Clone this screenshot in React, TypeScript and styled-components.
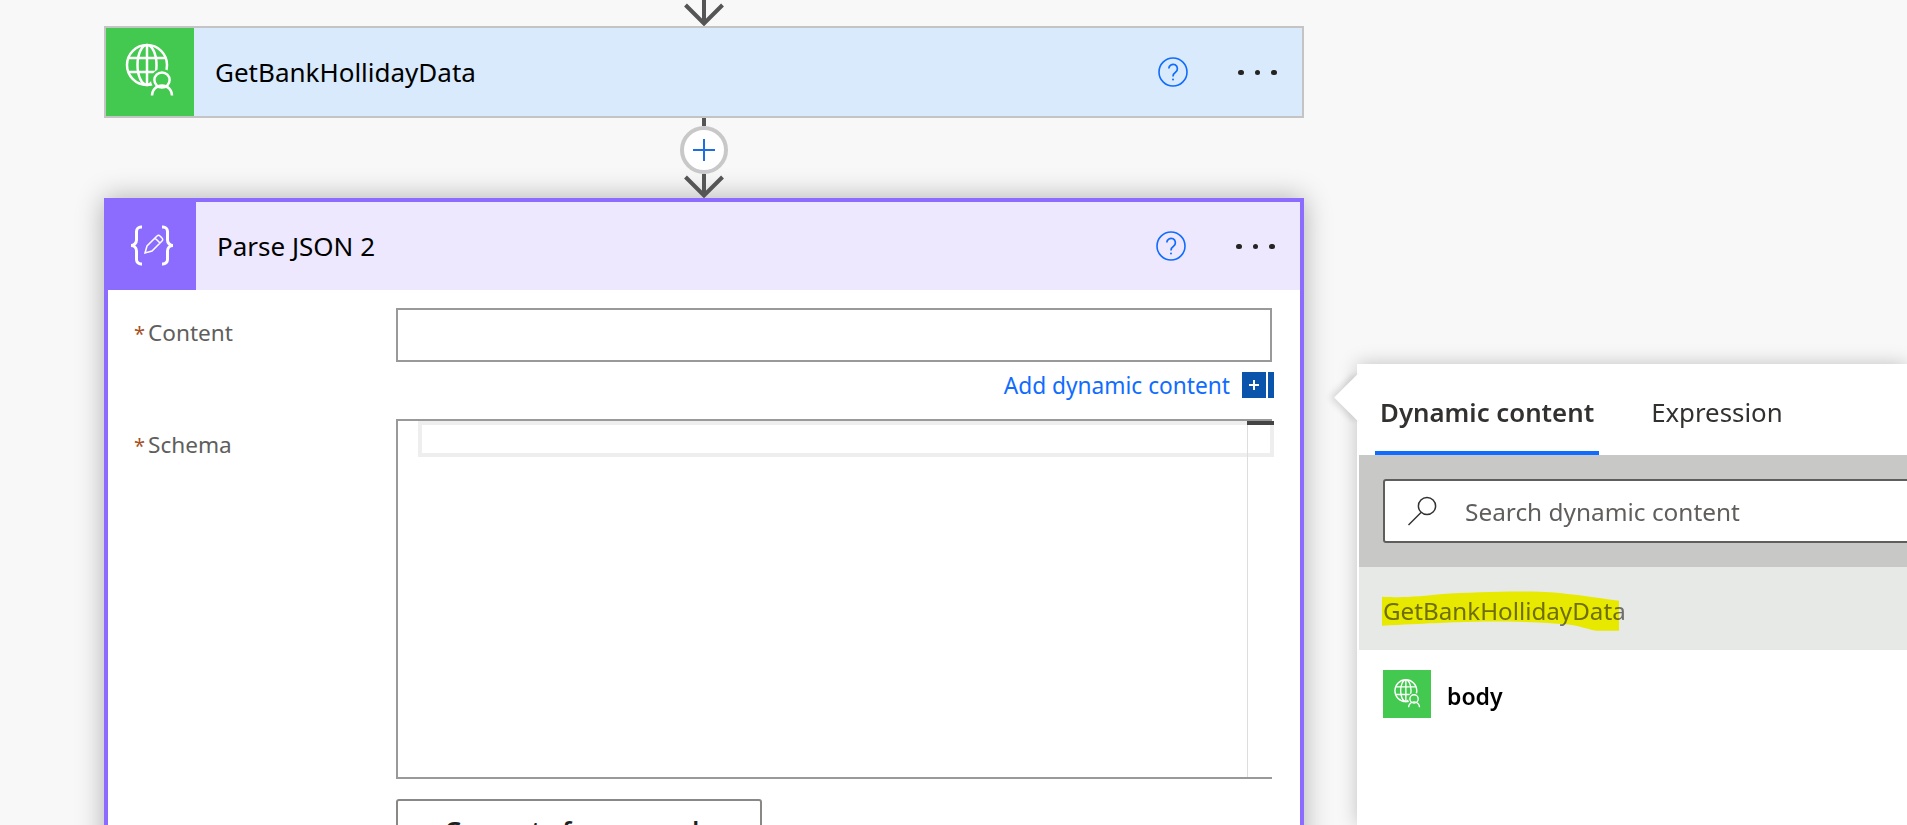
import React from 'react';
import styled, {createGlobalStyle} from 'styled-components';

const GlobalStyle = createGlobalStyle`
  html, body {
    margin: 0;
    padding: 0;
    background: #f8f8f8;
  }
  * {
    box-sizing: border-box;
  }
`;

const FONT = `"Noto Sans", "Open Sans", "Liberation Sans", sans-serif`;
const GREEN = '#43c94f';
const PURPLE = '#8c6cff';
const BLUE = '#0f6cff';

const Page = styled.div`
  position: relative;
  width: 1907px;
  height: 825px;
  overflow: hidden;
  background: #f8f8f8;
  font-family: ${FONT};
  padding-left: 104px;
`;

const Flow = styled.div`
  width: 1200px;
  display: flex;
  flex-direction: column;
`;

const ArrowWrap = styled.div`
  display: flex;
  justify-content: center;
  position: relative;
  z-index: 1;
`;

const Connector = styled.div`
  height: 80px;
  display: flex;
  flex-direction: column;
  align-items: center;
  position: relative;
  z-index: 1;
`;

const Stem = styled.div`
  width: 4px;
  height: 8px;
  background: #555;
`;

const AddCircle = styled.div`
  width: 48px;
  height: 48px;
  border: 4px solid #c8c8c8;
  border-radius: 50%;
  background: #fff;
  display: flex;
  align-items: center;
  justify-content: center;
`;

const Card = styled.div<{$active?: boolean}>`
  position: relative;
  background: #fff;
  border: ${p => (p.$active ? `4px solid ${PURPLE}` : '2px solid #c4c4c4')};
  box-shadow: ${p => (p.$active ? '0 0 26px rgba(0, 0, 0, 0.3)' : 'none')};
`;

const CardHead = styled.div<{$bg: string}>`
  height: 88px;
  display: flex;
  align-items: center;
  background: ${p => p.$bg};
  padding-right: 25px;
`;

const IconBox = styled.div<{$bg: string; $size: number}>`
  width: ${p => p.$size}px;
  height: ${p => p.$size}px;
  flex: none;
  background: ${p => p.$bg};
  display: flex;
  align-items: center;
  justify-content: center;
`;

const CardTitle = styled.div`
  flex: 1;
  margin-left: 21px;
  font-size: 26px;
  color: #000;
`;

const HelpButton = styled.div`
  width: 30px;
  height: 30px;
  margin-right: 50px;
`;

const Dots = styled.div`
  display: flex;
  gap: 11px;
  width: 39px;
  margin-top: 1px;
`;

const Dot = styled.span`
  width: 5.6px;
  height: 5.6px;
  border-radius: 50%;
  background: #252423;
`;

const CardBody = styled.div`
  display: grid;
  grid-template-columns: 288px 876px;
  padding-top: 18px;
  height: 600px;
  align-content: start;
`;

const Label = styled.div<{$top: number}>`
  padding: ${p => p.$top}px 0 0 26px;
  font-size: 22.6px;
  line-height: 28px;
  color: #605e5c;
`;

const Star = styled.span`
  color: #a8501f;
  margin-right: 3px;
  font-size: 20px;
`;

const TextBox = styled.div`
  height: 54px;
  background: #fff;
  border: 2px solid #999;
`;

const DynamicRow = styled.div`
  grid-column: 2;
  display: flex;
  align-items: center;
  justify-content: flex-end;
  gap: 12px;
  height: 26px;
  margin: 10px -2px 21px 0;
  font-size: 22.7px;
  color: ${BLUE};
`;

const AddButton = styled.div`
  display: flex;
  gap: 2px;
  height: 26px;
`;

const AddButtonMain = styled.div`
  width: 24px;
  background: #0a54ab;
  color: #fff;
  display: flex;
  align-items: center;
  justify-content: center;
`;

const AddButtonEdge = styled.div`
  width: 6px;
  background: #0a54ab;
`;

const Editor = styled.div`
  position: relative;
  height: 360px;
  background: #fff;
  border: 2px solid #999;
  border-right: none;
`;

const LineHighlight = styled.div`
  position: absolute;
  left: 20px;
  right: -2px;
  top: 0;
  height: 36px;
  border: 4px solid #eee;
`;

const ScrollRail = styled.div`
  position: absolute;
  left: 849px;
  top: 0;
  bottom: 0;
  width: 1px;
  background: #ddd;
`;

const ScrollMark = styled.div`
  position: absolute;
  left: 849px;
  right: -2px;
  top: 0;
  height: 4px;
  background: #444;
`;

const SampleButton = styled.div`
  grid-column: 2;
  width: 366px;
  height: 62px;
  margin-top: 20px;
  border: 2px solid #8a8886;
  border-radius: 3px;
  background: #fff;
  display: flex;
  align-items: center;
  justify-content: center;
  font-size: 24.6px;
  font-weight: 600;
  color: #201f1e;
`;

/* floating dynamic content flyout, sits over the canvas */
const Flyout = styled.div`
  position: absolute;
  left: 1357px;
  top: 364px;
  right: 0;
  bottom: 0;
  z-index: 2;
  padding-left: 2px;
  background: #fff;
  box-shadow: 0 0 18px rgba(0, 0, 0, 0.22);
`;

const FlyoutTip = styled.div`
  position: absolute;
  left: -16px;
  top: 17px;
  width: 33px;
  height: 33px;
  background: #fff;
  transform: rotate(45deg);
  box-shadow: -3px 3px 7px rgba(0, 0, 0, 0.14);
`;

const TabBar = styled.div`
  position: relative;
  height: 91px;
  display: flex;
  gap: 47px;
  padding-left: 16px;
  background: #fff;
`;

const Tab = styled.div<{$active?: boolean}>`
  height: 91px;
  padding: 8px 5px 0;
  display: flex;
  align-items: center;
  font-size: 25.8px;
  font-weight: ${p => (p.$active ? 600 : 400)};
  color: #323130;
  border-bottom: 4px solid ${p => (p.$active ? BLUE : 'transparent')};
`;

const SearchSection = styled.div`
  position: relative;
  height: 112px;
  padding: 24px 0 0 24px;
  background: #c8c9c7;
`;

const SearchBox = styled.div`
  height: 64px;
  margin-right: -10px;
  padding-left: 22px;
  display: flex;
  align-items: center;
  gap: 28px;
  background: #fff;
  border: 2px solid #605e5c;
  border-radius: 3px;
  font-size: 24.4px;
  color: #605e5c;
`;

const GroupRow = styled.div`
  position: relative;
  height: 83px;
  padding: 4px 0 0 24px;
  display: flex;
  align-items: center;
  background: #e7e9e7;
  font-size: 24.2px;
  color: #6f6e6c;
`;

const Marker = styled.svg`
  position: absolute;
  left: 23px;
  top: 23px;
  mix-blend-mode: multiply;
`;

const ItemRow = styled.div`
  position: relative;
  display: flex;
  align-items: center;
  gap: 16px;
  padding: 20px 0 0 24px;
  background: #fff;
`;

const ItemName = styled.div`
  font-size: 23px;
  font-weight: 600;
  color: #000;
  position: relative;
  top: 2px;
`;

function FlowArrow({height}: {height: number}) {
  return (
    <svg width="48" height={height} viewBox={`0 0 48 ${height}`} fill="none">
      <path d={`M24 0V${height - 2}M5.5 ${height - 21}L24 ${height - 2.5}L42.5 ${height - 21}`} stroke="#555" strokeWidth="4"/>
    </svg>
  );
}

function GlobeUserIcon({size}: {size: number}) {
  return (
    <svg width={size} height={size} viewBox="0 0 64 64" fill="none" stroke="#fff" strokeWidth="2.5">
      <mask id={`globe-cut-${size}`}>
        <rect width="64" height="64" fill="#fff" stroke="none"/>
        <circle cx="44" cy="40" r="11" fill="#000" stroke="none"/>
        <path d="M30 60a14 14 0 0 1 28 0z" fill="#000" stroke="none"/>
      </mask>
      <g mask={`url(#globe-cut-${size})`}>
        <circle cx="29" cy="25" r="20"/>
        <ellipse cx="29" cy="25" rx="9.5" ry="20"/>
        <path d="M29 5V45M10.5 18H47.5M10.5 32H47.5"/>
      </g>
      <circle cx="44" cy="40" r="7.6"/>
      <path d="M34 55.5a10 10 0 0 1 20 0"/>
    </svg>
  );
}

function ParseIcon() {
  return (
    <svg width="64" height="64" viewBox="0 0 64 64" fill="none" stroke="#fff">
      <path strokeWidth="3" d="M22 13h-1a4.5 4.5 0 0 0-4.5 4.5v8.5a5.5 5.5 0 0 1-5.5 5.5a5.5 5.5 0 0 1 5.5 5.5v8.5a4.5 4.5 0 0 0 4.5 4.5h1"/>
      <path strokeWidth="3" d="M42 13h1a4.5 4.5 0 0 1 4.5 4.5v8.5a5.5 5.5 0 0 0 5.5 5.5a5.5 5.5 0 0 0-5.5 5.5v8.5a4.5 4.5 0 0 1-4.5 4.5h-1"/>
      <path strokeWidth="1.5" d="M25 39l2-7l10-10a2 2 0 0 1 3 0l2 2a2 2 0 0 1 0 3l-10 10zM35 24l5 5"/>
    </svg>
  );
}

function HelpIcon() {
  return (
    <svg width="30" height="30" viewBox="0 0 30 30" fill="none" stroke={BLUE}>
      <circle cx="15" cy="15" r="14" strokeWidth="1.6"/>
      <path strokeWidth="1.7" d="M10.8 11.6a4.3 4.3 0 1 1 6.7 3.6c-1.6 1.1-2.5 1.8-2.5 4.2"/>
      <circle cx="15" cy="22.6" r="1" fill={BLUE} stroke="none"/>
    </svg>
  );
}

function SearchIcon() {
  return (
    <svg width="30" height="30" viewBox="0 0 30 30" fill="none" stroke="#323130" strokeWidth="1.5" style={{flex: 'none'}}>
      <circle cx="20" cy="10" r="8.6"/>
      <path d="M14 16.5L1.5 29"/>
    </svg>
  );
}

function MoreDots() {
  return (
    <Dots>
      <Dot/>
      <Dot/>
      <Dot/>
    </Dots>
  );
}

export default function App(): React.ReactElement {
  return (
    <Page>
      <GlobalStyle/>
      <Flow>
        <ArrowWrap>
          <FlowArrow height={26}/>
        </ArrowWrap>

        <Card>
          <CardHead $bg="#d8eafb">
            <IconBox $bg={GREEN} $size={88}>
              <GlobeUserIcon size={64}/>
            </IconBox>
            <CardTitle>GetBankHollidayData</CardTitle>
            <HelpButton><HelpIcon/></HelpButton>
            <MoreDots/>
          </CardHead>
        </Card>

        <Connector>
          <Stem/>
          <AddCircle>
            <svg width="22" height="22" viewBox="0 0 22 22" stroke="#1d6fe0" strokeWidth="2">
              <path d="M11 0V22M0 11H22"/>
            </svg>
          </AddCircle>
          <FlowArrow height={24}/>
        </Connector>

        <Card $active>
          <CardHead $bg="#eee8ff">
            <IconBox $bg={PURPLE} $size={88}>
              <ParseIcon/>
            </IconBox>
            <CardTitle>Parse JSON 2</CardTitle>
            <HelpButton><HelpIcon/></HelpButton>
            <MoreDots/>
          </CardHead>
          <CardBody>
            <Label $top={11}><Star>*</Star>Content</Label>
            <TextBox/>
            <DynamicRow>
              Add dynamic content
              <AddButton>
                <AddButtonMain>
                  <svg width="10" height="10" viewBox="0 0 10 10" stroke="#fff" strokeWidth="2">
                    <path d="M5 0V10M0 5H10"/>
                  </svg>
                </AddButtonMain>
                <AddButtonEdge/>
              </AddButton>
            </DynamicRow>
            <Label $top={12}><Star>*</Star>Schema</Label>
            <Editor>
              <LineHighlight/>
              <ScrollRail/>
              <ScrollMark/>
            </Editor>
            <SampleButton>Generate from sample</SampleButton>
          </CardBody>
        </Card>
      </Flow>

      <Flyout>
        <FlyoutTip/>
        <TabBar>
          <Tab $active>Dynamic content</Tab>
          <Tab>Expression</Tab>
        </TabBar>
        <SearchSection>
          <SearchBox>
            <SearchIcon/>
            Search dynamic content
          </SearchBox>
        </SearchSection>
        <GroupRow>
          GetBankHollidayData
          <Marker width="237" height="42" viewBox="126 30 711 125">
            <path
              fill="#ffff00"
              d="M126 50C160 52 210 52 300 42C400 36 520 32 600 35C680 38 760 52 837 62V152H770C740 146 720 138 700 135C620 126 480 122 400 125C320 127 260 130 126 137Z"
            />
          </Marker>
        </GroupRow>
        <ItemRow>
          <IconBox $bg={GREEN} $size={48}>
            <GlobeUserIcon size={35}/>
          </IconBox>
          <ItemName>body</ItemName>
        </ItemRow>
      </Flyout>
    </Page>
  );
}
